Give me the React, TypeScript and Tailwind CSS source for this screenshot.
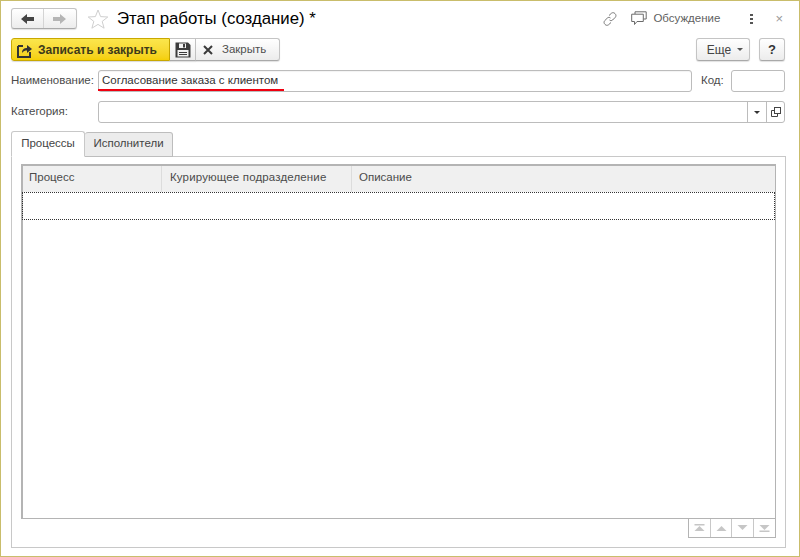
const font = "font-['Liberation_Sans',Arial,sans-serif]";

const ArrowLeft = ({ color }: { color: string }) => (
  <svg width="14" height="10" viewBox="0 0 14 10">
    <path d="M0 5 L6 0 V3 H13 V7 H6 V10 Z" fill={color} />
  </svg>
);

const ArrowRight = ({ color }: { color: string }) => (
  <svg width="14" height="10" viewBox="0 0 14 10">
    <path d="M13 5 L7 0 V3 H0 V7 H7 V10 Z" fill={color} />
  </svg>
);

const Star = () => (
  <svg width="22" height="20" viewBox="0 0 22 20" fill="none">
    <path d="M11 1 L13.6 7.6 L20.8 8 L15.2 12.4 L17.1 19.2 L11 15.4 L4.9 19.2 L6.8 12.4 L1.2 8 L8.4 7.6 Z" stroke="#cfcfcf" strokeWidth="1" />
  </svg>
);

const SaveClose = () => (
  <svg width="16" height="16" viewBox="0 0 16 16" fill="none">
    <path d="M1 4 V15 H13 V10" stroke="#333" strokeWidth="2" />
    <path d="M1 4 H6" stroke="#333" strokeWidth="2" />
    <path d="M5 11 C5 7 7.5 6 10 6 V3 L15 7 L10 11 V8.5 C8 8.5 6.5 9 5 11 Z" fill="#333" />
  </svg>
);

const Floppy = () => (
  <svg width="16" height="16" viewBox="0 0 16 16">
    <path d="M0.5 0.5 H13 L15.5 3 V15.5 H0.5 Z" fill="#3c3c3c" />
    <rect x="4" y="1.5" width="7" height="4.5" fill="#f2f2f2" />
    <rect x="8" y="2" width="2" height="3.5" fill="#3c3c3c" />
    <rect x="2.5" y="8" width="11" height="6.5" fill="#f2f2f2" />
    <rect x="4" y="10" width="8" height="1" fill="#3c3c3c" />
    <rect x="4" y="12" width="8" height="1" fill="#3c3c3c" />
  </svg>
);

const Cross = () => (
  <svg width="10" height="10" viewBox="0 0 10 10">
    <path d="M1 1 L9 9 M9 1 L1 9" stroke="#3a3a3a" strokeWidth="2" />
  </svg>
);

const LinkIcon = () => (
  <svg width="14" height="14" viewBox="0 0 14 14" fill="none" stroke="#777" strokeWidth="1">
    <path d="M6 3.5 L8.5 1.2 C9.6 0.4 11 0.5 12 1.6 C13.2 2.8 13.2 4.2 12.3 5.3 L9.6 8 C8.6 8.9 7.4 8.8 6.5 8" />
    <path d="M8 10.5 L5.5 12.8 C4.4 13.6 3 13.5 2 12.4 C0.8 11.2 0.8 9.8 1.7 8.7 L4.4 6 C5.4 5.1 6.6 5.2 7.5 6" />
  </svg>
);

const ChatIcon = () => (
  <svg width="16" height="15" viewBox="0 0 16 15" fill="none" stroke="#6b6b6b" strokeWidth="1">
    <path d="M4 3 V0.8 H15.2 V8 H12.5" />
    <path d="M0.7 3.2 H12.3 V10.5 H6 L3.5 13.5 V10.5 H0.7 Z" fill="#fff" />
  </svg>
);

const Tri = ({ dir, bar }: { dir: 'up' | 'down'; bar?: boolean }) => (
  <svg width="11" height="8" viewBox="0 0 11 8">
    {dir === 'up' ? (
      <>
        {bar && <rect x="0.5" y="0" width="10" height="1.5" fill="#c6c6c6" />}
        <path d="M5.5 2 L10.5 7 H0.5 Z" fill="#c6c6c6" />
      </>
    ) : (
      <>
        <path d="M0.5 1 H10.5 L5.5 6 Z" fill="#c6c6c6" />
        {bar && <rect x="0.5" y="6.5" width="10" height="1.5" fill="#c6c6c6" />}
      </>
    )}
  </svg>
);

const btn = 'flex items-center justify-center border border-[#c4c4c4] border-b-[#a9a9a9] bg-gradient-to-b from-white to-[#ececec] shadow-[0_1px_1px_rgba(0,0,0,0.12)]';

export default function App() {
  return (
    <div className={`${font} w-[800px] h-[557px] box-border border border-[#c9bd6b] bg-white text-[11.5px] text-[#4b4b4b] flex flex-col overflow-hidden pl-[10px] pr-[14px]`}>
      {/* шапка */}
      <div className="flex items-center h-[21px] mt-[7px]">
        <div className={`${btn} w-[66px] h-[21px] rounded-[3px]`}>
          <div className="w-[33px] h-full flex items-center justify-center border-r border-[#d4d4d4]">
            <ArrowLeft color="#444" />
          </div>
          <div className="w-[33px] h-full flex items-center justify-center">
            <ArrowRight color="#b5b5b5" />
          </div>
        </div>
        <div className="ml-[10px] flex"><Star /></div>
        <div className="ml-[8px] pt-[2px] text-[16.8px] text-black leading-none whitespace-nowrap">Этап работы (создание) *</div>
        <div className="ml-auto flex items-center">
          <LinkIcon />
          <div className="ml-[14px] flex"><ChatIcon /></div>
          <span className="ml-[6px] text-[#5f5f5f]">Обсуждение</span>
          <div className="ml-[30px] flex flex-col gap-[2px]">
            <span className="w-[3px] h-[2px] bg-[#555]" />
            <span className="w-[3px] h-[2px] bg-[#555]" />
            <span className="w-[3px] h-[2px] bg-[#555]" />
          </div>
          <span className="ml-[22px] mr-[2px] text-[#9a9a9a] text-[13px] leading-none">×</span>
        </div>
      </div>

      {/* командная панель */}
      <div className="flex items-center h-[23px] mt-[9px]">
        <div className="flex items-center w-[159px] h-[23px] rounded-l-[3px] border border-[#c9a800] bg-gradient-to-b from-[#fbe64c] to-[#f5cf05] shadow-[0_1px_1px_rgba(0,0,0,0.15)] pl-[5px]">
          <SaveClose />
          <span className="ml-[5px] font-bold text-[#3d3a1a] text-[12px] whitespace-nowrap">Записать и закрыть</span>
        </div>
        <div className={`${btn} w-[26px] h-[23px] border-l-0`}>
          <Floppy />
        </div>
        <div className={`${btn} w-[84px] h-[23px] rounded-r-[3px] border-l-0 !justify-start pl-[7px]`}>
          <Cross />
          <span className="ml-[9px] text-[#4f4f4f]">Закрыть</span>
        </div>
        <div className={`${btn} w-[54px] h-[23px] rounded-[3px] ml-auto text-[#444] text-[12px]`}>
          <span className="ml-[4px]">Еще</span>
          <span className="ml-[6px] w-0 h-0 border-x-[3px] border-x-transparent border-t-[3px] border-t-[#555]" />
        </div>
        <div className={`${btn} w-[26px] h-[23px] rounded-[3px] ml-[9px] font-bold text-[13px] text-[#333]`}>?</div>
      </div>

      {/* Наименование */}
      <div className="flex items-center h-[22px] mt-[9px]">
        <span className="w-[87px] shrink-0">Наименование:</span>
        <div className="relative w-[594px] h-[22px] border border-[#bcbcbc] rounded-[3px] flex items-center pl-[3px] text-[#333] shadow-[inset_0_1px_1px_rgba(0,0,0,0.05)]">
          Согласование заказа с клиентом
          <span className="absolute left-[-1px] top-[18px] w-[186px] h-[2px] bg-[#f00010]" />
        </div>
        <span className="ml-[9px] w-[30px] shrink-0">Код:</span>
        <div className="w-[54px] h-[22px] border border-[#bcbcbc] rounded-[3px]" />
      </div>

      {/* Категория */}
      <div className="flex items-center h-[22px] mt-[9px]">
        <span className="w-[87px] shrink-0">Категория:</span>
        <div className="flex-1 h-[22px] border border-[#bcbcbc] rounded-[3px] flex justify-end">
          <div className="w-[19px] border-l border-[#bcbcbc] flex items-center justify-center">
            <span className="w-0 h-0 border-x-[3px] border-x-transparent border-t-[3px] border-t-[#333]" />
          </div>
          <div className="w-[18px] border-l border-[#bcbcbc] flex items-center justify-center">
            <svg width="10" height="10" viewBox="0 0 10 10" fill="none" stroke="#444" strokeWidth="1">
              <rect x="3.5" y="0.5" width="6" height="6" />
              <path d="M3.5 3.5 H0.5 V9.5 H6.5 V6.5" />
            </svg>
          </div>
        </div>
      </div>

      {/* вкладки */}
      <div className="flex h-[26px] mt-[8px] items-end relative z-10">
        <div className="w-[74px] h-[26px] border border-[#c8c8c8] border-b-white rounded-t-[3px] bg-white flex items-center justify-center text-[#444]">Процессы</div>
        <div className="w-[88px] h-[25px] border border-l-0 border-[#bdbdbd] rounded-t-[3px] bg-[#ececec] flex items-center justify-center text-[#444] pb-[2px]">Исполнители</div>
      </div>
      <div className="h-[392px] mt-[-1px] mr-[-1px] border border-[#c8c8c8] px-[9px] pt-[7px] flex flex-col">
        <div className="h-[355px] border border-[#b4b4b4] border-l-2 border-t-2 flex flex-col">
          <div className="flex h-[26px] bg-[#f0f0f0] shrink-0">
            <div className="w-[139px] px-[6px] pb-[3px] flex items-center border-r border-[#dcdcdc]">Процесс</div>
            <div className="w-[190px] px-[8px] pb-[3px] flex items-center border-r border-[#dcdcdc] tracking-[0.15px]">Курирующее подразделение</div>
            <div className="flex-1 px-[7px] pb-[3px] flex items-center">Описание</div>
          </div>
          <div className="h-[28px] border border-dotted border-[#333] ml-[-1px] shrink-0" />
        </div>
        <div className="flex justify-end">
          <div className="flex h-[19px] border border-t-0 border-[#b4b4b4]">
            <div className="w-[22px] flex items-center justify-center border-r border-[#c8c8c8]"><Tri dir="up" bar /></div>
            <div className="w-[21px] flex items-center justify-center border-r border-[#c8c8c8]"><Tri dir="up" /></div>
            <div className="w-[22px] flex items-center justify-center border-r border-[#c8c8c8]"><Tri dir="down" /></div>
            <div className="w-[21px] flex items-center justify-center"><Tri dir="down" bar /></div>
          </div>
        </div>
      </div>
    </div>
  );
}
